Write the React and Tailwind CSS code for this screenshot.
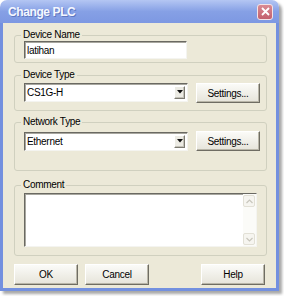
const Group = ({ label, className = '', children }) => (
  <fieldset className={`border border-[#d0d0bf] rounded-[3px] p-0 ${className}`}>
    <legend className="ml-[6px] px-[2px] text-[10px] leading-[12px] tracking-[-0.3px] text-black">
      {label}
    </legend>
    {children}
  </fieldset>
)

const XpButton = ({ children, className = '' }) => (
  <div
    className={`flex items-center justify-center h-[20px] w-[64px] bg-gradient-to-b from-[#fbfbf8] to-[#e6e4da] border border-t-[#ffffff] border-l-[#ffffff] border-r-[#6f6d63] border-b-[#6f6d63] shadow-[inset_-1px_-1px_0_#b9b6a8] text-[10px] tracking-[-0.3px] text-black ${className}`}
  >
    {children}
  </div>
)

const sunken =
  'bg-white border border-t-[#6a6962] border-l-[#6a6962] border-r-[#f4f4f0] border-b-[#f4f4f0] shadow-[inset_1px_1px_0_#a8a79f]'

const Combo = ({ value }) => (
  <div className={`flex items-center h-[19px] w-[164px] pl-[2px] pr-[2px] ${sunken}`}>
    <span className="flex-1 text-[10px] tracking-[-0.3px] text-black">{value}</span>
    <div className="flex items-center justify-center w-[11px] h-[13px] bg-[#ecebe4] border border-t-[#ffffff] border-l-[#ffffff] border-r-[#7d7b72] border-b-[#7d7b72] shadow-[inset_-1px_-1px_0_#c4c2b8]">
      <svg width="6" height="4" viewBox="0 0 6 4">
        <path d="M0 0h6L3 3.5z" fill="#111" />
      </svg>
    </div>
  </div>
)

const Chevron = ({ up }) => (
  <div className="flex items-center justify-center h-[12px] bg-[#f6f5f0] border border-[#e2e0d6] rounded-[2px]">
    <svg width="7" height="5" viewBox="0 0 7 5">
      <path d={up ? 'M0.5 4L3.5 1L6.5 4' : 'M0.5 1L3.5 4L6.5 1'} stroke="#c8c6bc" strokeWidth="1.2" fill="none" />
    </svg>
  </div>
)

export default function App() {
  return (
    <div className="w-[284px] h-[296px] bg-white font-['Liberation_Sans',Arial,sans-serif]">
      <div className="w-[279px] h-[291px] flex flex-col rounded-t-[7px] shadow-[3px_3px_3px_rgba(0,0,0,0.35)]">
        {/* title bar */}
        <div className="h-[23px] flex items-center justify-between pl-[8px] pr-[6px] rounded-t-[7px] bg-gradient-to-b from-[#b4c6f3] via-[#86a0e5] to-[#7d98e2]">
          <span className="text-[12px] font-bold tracking-[-0.4px] text-[#f4f7ff] [text-shadow:1px_1px_0_#5f77c0]">
            Change PLC
          </span>
          <div className="flex items-center justify-center w-[16px] h-[16px] rounded-[3px] bg-gradient-to-b from-[#d98a93] to-[#c2606d] border border-[#f3e3e6]">
            <svg width="9" height="9" viewBox="0 0 9 9">
              <path d="M1 1L8 8M8 1L1 8" stroke="#fff" strokeWidth="1.8" />
            </svg>
          </div>
        </div>

        {/* body */}
        <div className="flex-1 bg-[#ece9d8] border-x-[3px] border-b-[3px] border-[#7390df] pl-[11px] pr-[9px] pt-[6px]">
          <Group label="Device Name" className="pb-[3px]">
            <div className="pl-[9px]">
              <div className={`flex items-center h-[18px] w-[163px] pl-[2px] text-[10px] tracking-[-0.3px] text-black ${sunken}`}>
                latihan
              </div>
            </div>
          </Group>

          <Group label="Device Type" className="mt-[6px] pb-[7px]">
            <div className="flex items-center gap-[8px] pl-[9px]">
              <Combo value="CS1G-H" />
              <XpButton className="mt-[2px]">Settings...</XpButton>
            </div>
          </Group>

          <Group label="Network Type" className="mt-[5px] pb-[19px]">
            <div className="flex items-center gap-[8px] pl-[9px] mt-[3px]">
              <Combo value="Ethernet" />
              <XpButton>Settings...</XpButton>
            </div>
          </Group>

          <Group label="Comment" className="mt-[8px] pb-[8px]">
            <div className="pl-[9px] pr-[9px] mt-[2px]">
              <div className={`flex h-[54px] ${sunken}`}>
                <div className="flex-1" />
                <div className="w-[13px] flex flex-col justify-between bg-[#fbfbf8] py-[1px] pr-[1px]">
                  <Chevron up />
                  <Chevron />
                </div>
              </div>
            </div>
          </Group>

          <div className="flex items-center mt-[8px] pr-[2px]">
            <XpButton className="h-[21px]">OK</XpButton>
            <XpButton className="h-[21px] ml-[7px]">Cancel</XpButton>
            <XpButton className="h-[21px] ml-auto">Help</XpButton>
          </div>
        </div>
      </div>
    </div>
  )
}
